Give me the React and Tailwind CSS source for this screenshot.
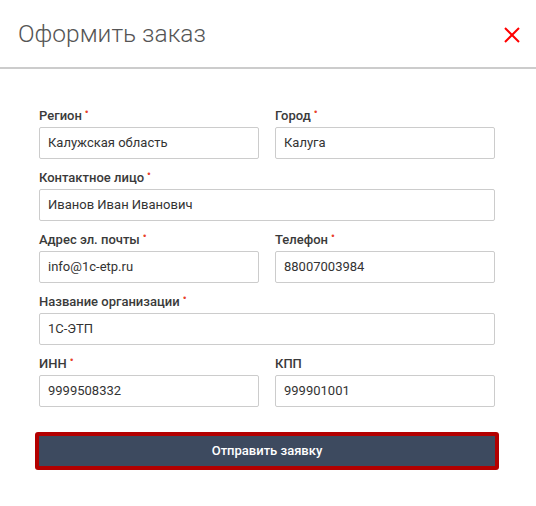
const FONT = { fontFamily: "Roboto, 'Liberation Sans', sans-serif" };

function Field({ label, value, required }) {
  return (
    <div className="flex flex-col">
      <div className="h-4 flex items-center text-[13px] font-medium text-[#3a3a3a] mb-[3px]">
        {label}
        {required && <span className="text-[#e8402a] text-[11px] ml-[3px] -mt-[6px]">•</span>}
      </div>
      <div className="h-[32px] border border-[#ccc] rounded-[2px] px-[8px] flex items-center text-[13px] text-[#333]">
        {value}
      </div>
    </div>
  );
}

export default function App() {
  return (
    <div className="w-[536px] h-[506px] bg-white" style={FONT}>
      <div className="h-[67px] flex items-center justify-between pl-[18px] pr-[16px]">
        <h1 className="text-[24.5px] font-light text-[#555] mt-[2px]">Оформить заказ</h1>
        <svg width="16" height="16" viewBox="0 0 16 16" className="mt-[2px]">
          <path d="M1 1 L15 15 M15 1 L1 15" stroke="#f00" strokeWidth="2" />
        </svg>
      </div>
      <div className="h-[2px] bg-[#ccc]" />
      <div className="pt-[39px] px-[39px] pr-[41px] flex flex-col gap-[11px]">
        <div className="grid grid-cols-2 gap-x-4">
          <Field label="Регион" value="Калужская область" required />
          <Field label="Город" value="Калуга" required />
        </div>
        <Field label="Контактное лицо" value="Иванов Иван Иванович" required />
        <div className="grid grid-cols-2 gap-x-4">
          <Field label="Адрес эл. почты" value="info@1c-etp.ru" required />
          <Field label="Телефон" value="88007003984" required />
        </div>
        <Field label="Название организации" value="1С-ЭТП" required />
        <div className="grid grid-cols-2 gap-x-4">
          <Field label="ИНН" value="9999508332" required />
          <Field label="КПП" value="999901001" />
        </div>
        <div className="mt-[14px] -mx-[4px] p-[4px] bg-[#b30000] rounded-[3px]">
          <button className="w-full h-[30px] bg-[#3d4a5f] text-white text-[13px] font-medium">
            Отправить заявку
          </button>
        </div>
      </div>
    </div>
  );
}
